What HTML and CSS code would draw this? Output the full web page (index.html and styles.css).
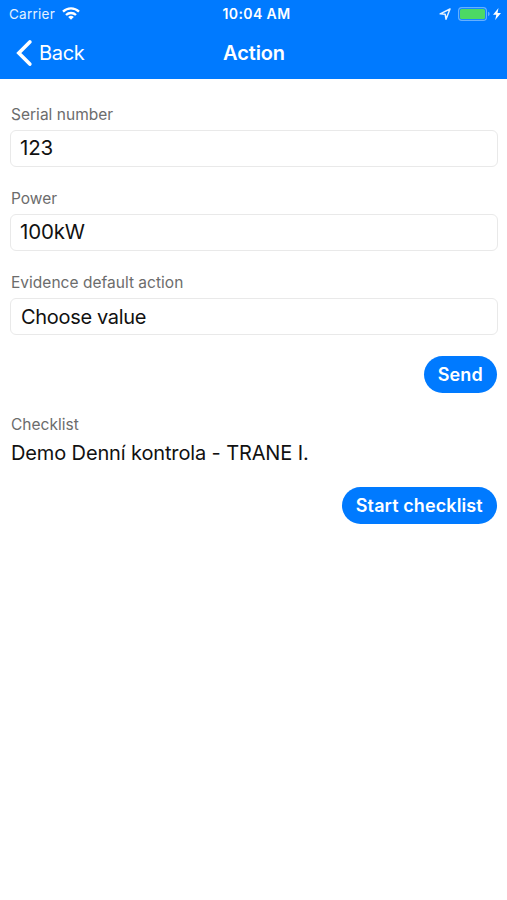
FILE: index.html
```html
<!DOCTYPE html>
<html lang="en">
<head>
<meta charset="utf-8">
<title>Action</title>
<link rel="stylesheet" href="styles.css">
</head>
<body>
<header class="header">
  <div class="status">
    <div class="status-left"><span class="carrier">Carrier</span>
      <svg class="wifi" width="18" height="13" viewBox="0 0 18 13" fill="none" stroke="#fff" stroke-width="2.3"><path d="M1 4.7a11.5 11.5 0 0 1 16 0"/><path d="M4 8a7.2 7.2 0 0 1 10 0"/><path d="M9 12.8 6.2 10a4 4 0 0 1 5.6 0z" fill="#fff" stroke="none"/></svg>
    </div>
    <time class="clock">10:04 AM</time>
    <div class="status-right">
      <svg width="12" height="12" viewBox="0 0 12 12" fill="none" stroke="#e4f1ff" stroke-width="1.5" stroke-linejoin="round"><path d="M11 1 1.2 5.8l5 .5.8 4.9z"/></svg>
      <svg class="battery" width="32" height="14" viewBox="0 0 32 14"><rect x=".6" y=".6" width="27.8" height="12.8" rx="3.2" fill="none" stroke="#66b0ff" stroke-width="1.2"/><rect x="2" y="2" width="25" height="10" rx="1.5" fill="#4cd964"/><path d="M30 4.8q1.7.6 1.7 2.2T30 9.2z" fill="#66b0ff"/></svg>
      <svg class="bolt" width="8" height="12" viewBox="0 0 8 12"><path d="M5.5 0 0 6.8h3.3L2.2 12 8 4.9H4.5z" fill="#fff"/></svg>
    </div>
  </div>
  <nav class="nav">
    <a class="back"><svg width="16" height="28" viewBox="0 0 16 28" fill="none" stroke="#fff" stroke-width="3.6" stroke-linecap="round"><path d="M13.8 2.9 2.8 14l11 11.1"/></svg><span>Back</span></a>
    <h1 class="title">Action</h1>
  </nav>
</header>
<main class="content">
  <div class="field"><div class="label">Serial number</div><div class="input"><span class="serial">123</span></div></div>
  <div class="field"><div class="label">Power</div><div class="input"><span class="power">100kW</span></div></div>
  <div class="field"><div class="label">Evidence default action</div><div class="input select"><span class="choose">Choose value</span></div></div>
  <div class="actions"><button class="button send"><span>Send</span></button></div>
  <div class="label checklist">Checklist</div>
  <div class="name">Demo Denní kontrola - TRANE I.</div>
  <div class="actions last"><button class="button start"><span>Start checklist</span></button></div>
</main>
</body>
</html>
```
FILE: styles.css
```css
* { box-sizing: border-box; }
body { margin: 0; min-height: 900px; background: #fff; color: #111; font-family: Inter, sans-serif; }
.header { height: 79px; background: #007aff; color: #fff; }
.status { height: 27px; display: grid; grid-template-columns: 1fr auto 1fr; align-items: center; padding: 0 6px 0 9px; }
.status-left, .status-right { display: flex; align-items: center; }
.status-right { justify-content: flex-end; }
.carrier { font-size: 13.5px; letter-spacing: .25px; color: #e4f1ff; }
.wifi { margin-left: 7px; }
.clock { font-size: 14px; font-weight: 600; letter-spacing: .4px; margin-left: 3px; }
.battery { margin-left: 7px; }
.bolt { margin-left: 3px; }
.nav { height: 52px; display: grid; grid-template-columns: 1fr auto 1fr; align-items: center; padding: 0 16px; }
.back { display: flex; align-items: center; gap: 7px; margin-bottom: 1px; font-size: 20px; letter-spacing: -.3px; }
.title { margin: 0 0 1px 1px; font-size: 20px; font-weight: 600; letter-spacing: -.1px; }
.content { padding: 25px 9.5px 0 10px; }
.field { height: 84px; }
.label { height: 20px; line-height: 21px; padding-left: 1px; color: #6c6c6c; font-size: 15.5px; letter-spacing: .02px; }
.input { height: 37px; margin-top: 6px; padding-left: 9px; border: 1px solid #e9e9e9; border-radius: 6px; font-size: 20.5px; line-height: 33px; letter-spacing: -.15px; }
.select { padding-left: 10px; line-height: 37px; font-size: 20px; letter-spacing: -.32px; }
.actions { display: flex; justify-content: flex-end; padding-right: .5px; }
.button { height: 37px; border: 0; border-radius: 19px; padding: 0; background: #007aff; color: #fff; font: 600 18px Inter, sans-serif; letter-spacing: .1px; }
.send { width: 73.5px; }
.start { width: 155.5px; }
.checklist { margin-top: 22px; line-height: 20px; }
.name { height: 28px; margin-top: 4px; padding-left: 1px; font-size: 20px; line-height: 29px; letter-spacing: -.13px; }
.last { margin-top: 20px; }
```
